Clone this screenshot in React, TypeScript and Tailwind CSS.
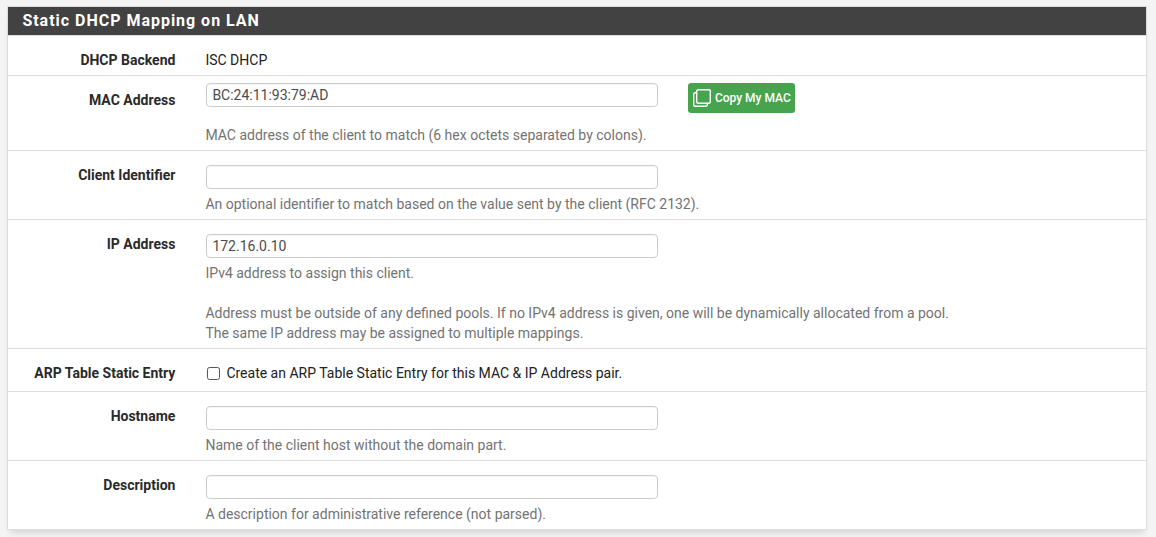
import type { ReactNode } from "react";

function Row({ label, height, children }: { label: string; height: string; children: ReactNode }) {
  return (
    <div className={`flex border-b border-[#dedede] last:border-b-0 ${height}`}>
      <div className="w-[167.4px] shrink-0 pt-[14px] text-right leading-5 font-bold text-[#2a2a2a]">{label}</div>
      <div className="flex-1 pl-[30px]">{children}</div>
    </div>
  );
}

function Field({ value = "" }: { value?: string }) {
  return (
    <input
      defaultValue={value}
      className="ml-[0.6px] block h-6 w-[452px] rounded border border-[#cccccc] bg-white pr-[6px] pl-[5.4px] text-[14px] text-[#4c4c4c] shadow-[inset_0_1px_1px_rgba(0,0,0,0.04)] outline-none"
    />
  );
}

function Help({ children }: { children: ReactNode }) {
  return <div className="mt-[5px] leading-5 text-[#737373]">{children}</div>;
}

export default function App() {
  return (
    <div className="h-[537px] overflow-hidden bg-[#f4f4f4] px-[7px] pt-[6px] font-[Roboto,sans-serif] text-[14px] text-[#212121]">
      <div className="h-[524px] w-[1140px] border border-[#dcdcdc] bg-white shadow-[0_6px_6px_-3px_rgba(0,0,0,0.12)]">
        <h2 className="flex h-[29px] items-center border-b border-[#dcdcdc] bg-[#424242] pl-[14.4px] text-[16px] font-bold tracking-[0.98px] text-white">
          Static DHCP Mapping on LAN
        </h2>
        <Row label="DHCP Backend" height="h-10">
          <div className="pt-[14px] leading-5">ISC DHCP</div>
        </Row>
        <Row label="MAC Address" height="h-[75px]">
          <div className="flex h-[49px] gap-[30px] pt-[7px]">
            <Field value="BC:24:11:93:79:AD" />
            <button className="flex h-[30px] w-[107px] items-center rounded-[3px] bg-[#46a44e] pl-[5px] text-[12px] font-medium text-white">
              <svg width="18" height="18" viewBox="0 0 18 18" fill="none" stroke="white" strokeWidth="1.4" className="mr-[3.9px] shrink-0">
                <rect x="3.7" y="0.7" width="13.6" height="13.6" rx="1.5" />
                <path d="M3.7 3.7H2.2A1.5 1.5 0 0 0 .7 5.2v10.6a1.5 1.5 0 0 0 1.5 1.5h10.6a1.5 1.5 0 0 0 1.5-1.5v-1.5" />
              </svg>
              <span className="whitespace-nowrap">Copy My MAC</span>
            </button>
          </div>
          <div className="leading-5 text-[#737373]">MAC address of the client to match (6 hex octets separated by colons).</div>
        </Row>
        <Row label="Client Identifier" height="h-[69px]">
          <div className="pt-[14px]">
            <Field />
            <Help>An optional identifier to match based on the value sent by the client (RFC 2132).</Help>
          </div>
        </Row>
        <Row label="IP Address" height="h-[129px]">
          <div className="pt-[14px]">
            <Field value="172.16.0.10" />
            <Help>
              IPv4 address to assign this client.
              <br />
              <br />
              Address must be outside of any defined pools. If no IPv4 address is given, one will be dynamically allocated from a pool.
              <br />
              The same IP address may be assigned to multiple mappings.
            </Help>
          </div>
        </Row>
        <Row label="ARP Table Static Entry" height="h-[43px]">
          <label className="flex items-center pt-[14px] leading-5">
            <input type="checkbox" className="mr-[6.4px] ml-[1.6px] size-[13px] appearance-none rounded-[2.5px] border border-[#555555] bg-white checked:bg-[#1976d2]" />
            Create an ARP Table Static Entry for this MAC &amp; IP Address pair.
          </label>
        </Row>
        <Row label="Hostname" height="h-[69px]">
          <div className="pt-[14px]">
            <Field />
            <Help>Name of the client host without the domain part.</Help>
          </div>
        </Row>
        <Row label="Description" height="h-[68px]">
          <div className="pt-[14px]">
            <Field />
            <Help>A description for administrative reference (not parsed).</Help>
          </div>
        </Row>
      </div>
    </div>
  );
}
